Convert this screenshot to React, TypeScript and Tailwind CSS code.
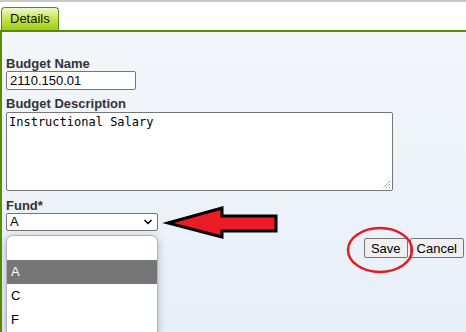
import React from 'react';
import { ChevronDown } from 'lucide-react';

const font = { fontFamily: '"Liberation Sans", Arial, sans-serif' };

export default function App() {
    const options = ['', 'A', 'C', 'F'];

    return (
        <div className="relative w-[466px] h-[332px] overflow-hidden bg-white flex flex-col text-[13px] text-black" style={font}>
            {/* Top rule */}
            <div className="h-[2px] bg-[#c8c8c8]" />

            {/* Tabs */}
            <div className="flex pl-[1px] pt-[5px]">
                <div className="h-[23px] px-[8px] flex items-center border border-b-0 border-[#5a8c00] rounded-t-[4px] bg-gradient-to-b from-[#eef9cc] via-[#c4e34a] to-[#a2cd06] text-[13px] text-[#111]">
                    Details
                </div>
            </div>

            {/* Panel */}
            <div className="relative flex-1 border-t-2 border-l-2 border-[#5a8c00] bg-gradient-to-b from-[#f3f6f9] to-[#e7eff8] pl-[4px] pr-[2px] pt-[24px]">
                <label className="block font-bold text-[13px] leading-[15px] text-[#333]">Budget Name</label>
                <div className="w-[130px] h-[19px] border border-[#767676] rounded-[2px] bg-white px-[3px] flex items-center text-[13px]">
                    2110.150.01
                </div>

                <label className="block mt-[6px] font-bold text-[13px] leading-[16px] text-[#333]">Budget Description</label>
                <div className="relative w-[387px] h-[79px] border border-[#767676] rounded-[2px] bg-white px-[2px] pt-[2px] text-[12px] leading-[15px]" style={{ fontFamily: '"DejaVu Sans Mono", "Liberation Mono", monospace' }}>
                    Instructional Salary
                    <svg className="absolute right-[1px] bottom-[1px]" width="10" height="10" viewBox="0 0 10 10">
                        <path d="M9 2 L2 9 M9 5 L5 9 M9 8 L8 9" stroke="#666" strokeWidth="1" strokeDasharray="1 1" />
                    </svg>
                </div>

                <label className="block mt-[8px] font-bold text-[13px] leading-[14px] text-[#333]">Fund*</label>
                <div className="w-[152px] h-[18px] border border-[#767676] rounded-[2px] bg-white pl-[3px] pr-[3px] flex items-center justify-between text-[13px]">
                    <span>A</span>
                    <ChevronDown size={12} strokeWidth={3.5} className="text-[#111]" />
                </div>

                <div className="flex justify-end gap-[2px] mt-[7px]">
                    <button className="h-[20px] px-[6px] border border-[#767676] rounded-[2px] bg-[#efefef] text-[13px] leading-none">Save</button>
                    <button className="h-[20px] px-[6px] border border-[#767676] rounded-[2px] bg-[#efefef] text-[13px] leading-none">Cancel</button>
                </div>
            </div>

            {/* Open dropdown list */}
            <div className="absolute left-[6px] top-[235px] w-[152px] bg-white border border-[#b4b4b4] rounded-t-[7px] shadow-[0_2px_8px_rgba(0,0,0,0.25)] overflow-hidden">
                {options.map((o, i) => (
                    <div
                        key={i}
                        className={`h-[24px] px-[4px] flex items-center text-[13px] ${o === 'A' ? 'bg-[#767676] text-white' : 'text-black'}`}
                    >
                        {o}
                    </div>
                ))}
            </div>

            {/* Annotations */}
            <svg className="absolute inset-0 pointer-events-none" width="466" height="332" viewBox="0 0 466 332">
                <polygon
                    points="168,223 222,208 222,216 276,216 276,231 222,231 222,237"
                    fill="#ed1c24"
                    stroke="#000"
                    strokeWidth="3"
                    strokeLinejoin="miter"
                />
                <ellipse cx="380" cy="250" rx="32" ry="22" fill="none" stroke="#e31b23" strokeWidth="2.5" />
            </svg>
        </div>
    );
}
